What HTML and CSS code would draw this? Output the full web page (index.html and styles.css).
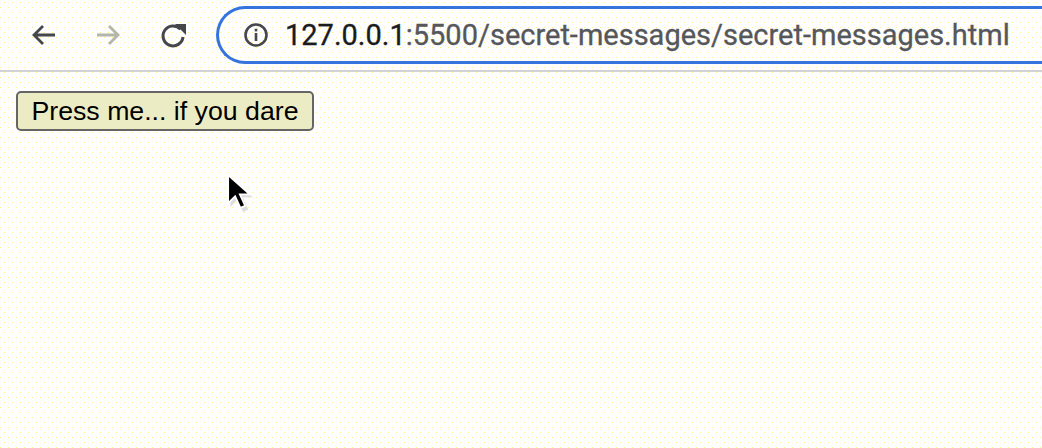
FILE: index.html
```html
<!DOCTYPE html>
<html>
<head>
<meta charset="utf-8">
<link rel="stylesheet" href="styles.css">
</head>
<body>
<header class="toolbar">
  <div class="nav">
    <svg class="icon" width="28" height="28" viewBox="0 0 28 28"><path d="M25 14H4M13 5L4 14l9 9" fill="none" stroke="#45474b" stroke-width="2.8"/></svg>
    <svg class="icon fwd" width="28" height="28" viewBox="0 0 28 28"><path d="M3 14h21M15 5l9 9-9 9" fill="none" stroke="#b3b6a8" stroke-width="2.8"/></svg>
    <svg class="icon" width="30" height="30" viewBox="0 0 30 30"><path d="M22.5 9.2A10 10 0 1 0 25 17" fill="none" stroke="#45474b" stroke-width="3"/><path d="M17 4h11v11z" fill="#45474b"/></svg>
  </div>
  <div class="omnibox">
    <svg class="info" width="26" height="26" viewBox="0 0 26 26"><circle cx="13" cy="13" r="10.5" fill="none" stroke="#45474b" stroke-width="2.6"/><rect x="11.7" y="11" width="2.6" height="8" fill="#45474b"/><rect x="11.7" y="6.8" width="2.6" height="2.6" fill="#45474b"/></svg>
    <span class="url"><span class="host">127.0.0.1</span>:5500/secret-messages/secret-messages.html</span>
  </div>
</header>
<main class="page">
  <button class="dare">Press me... if you dare</button>
</main>
<svg class="cursor" width="28" height="42" viewBox="0 0 24 36"><path d="M3 3v25l6-6 4.8 10.5 4.4-2L13.5 20H22z" fill="#cfcfcf" opacity="0.7"/><path d="M1 1v24l6-6 4.5 10 4-1.8L11 17.5h8.5z" fill="#000" stroke="#fff" stroke-width="1.5"/></svg>
</body>
</html>
```
FILE: styles.css
```css
html, body {
  margin: 0;
  height: 100%;
}
body {
  background-color: #fdfdfd;
  background-image:
    conic-gradient(at 1px 1px, transparent 75%, #fff38c 0),
    conic-gradient(at 1px 1px, transparent 75%, #fff38c 0);
  background-size: 8px 10px, 8px 10px;
  background-position: 4px 2px, 0 7px;
  overflow: hidden;
  font-family: "Liberation Sans", Arial, sans-serif;
}
.toolbar {
  height: 72px;
  border-bottom: 2px solid #d2d2d2;
  box-sizing: border-box;
  display: flex;
  align-items: center;
}
.nav {
  flex: none;
  box-sizing: border-box;
  display: flex;
  align-items: center;
  gap: 36px;
  padding-left: 30px;
  width: 216px;
}
.icon {
  display: block;
}
.omnibox {
  flex: 1;
  min-width: 0;
  height: 58px;
  box-sizing: border-box;
  border: 3.5px solid #3573de;
  border-right: none;
  border-radius: 30px 0 0 30px;
  display: flex;
  align-items: center;
  padding-left: 24px;
  overflow: hidden;
}
.info {
  display: block;
  flex: none;
  margin-right: 16px;
}
.url {
  font-family: Roboto, "Noto Sans", sans-serif;
  font-size: 29px;
  color: #55575b;
  white-space: nowrap;
  -webkit-text-stroke: 0.3px currentColor;
}
.host {
  color: #1a1b1e;
}
.page {
  padding: 19px 16px;
}
.dare {
  font-family: "Liberation Sans", Arial, sans-serif;
  font-size: 26.7px;
  color: #000;
  background: #ececc4;
  border: 2px solid #656565;
  border-radius: 5px;
  height: 40px;
  width: 298px;
  padding: 0;
  display: block;
}
.cursor {
  position: absolute;
  left: 227px;
  top: 174px;
}
```
